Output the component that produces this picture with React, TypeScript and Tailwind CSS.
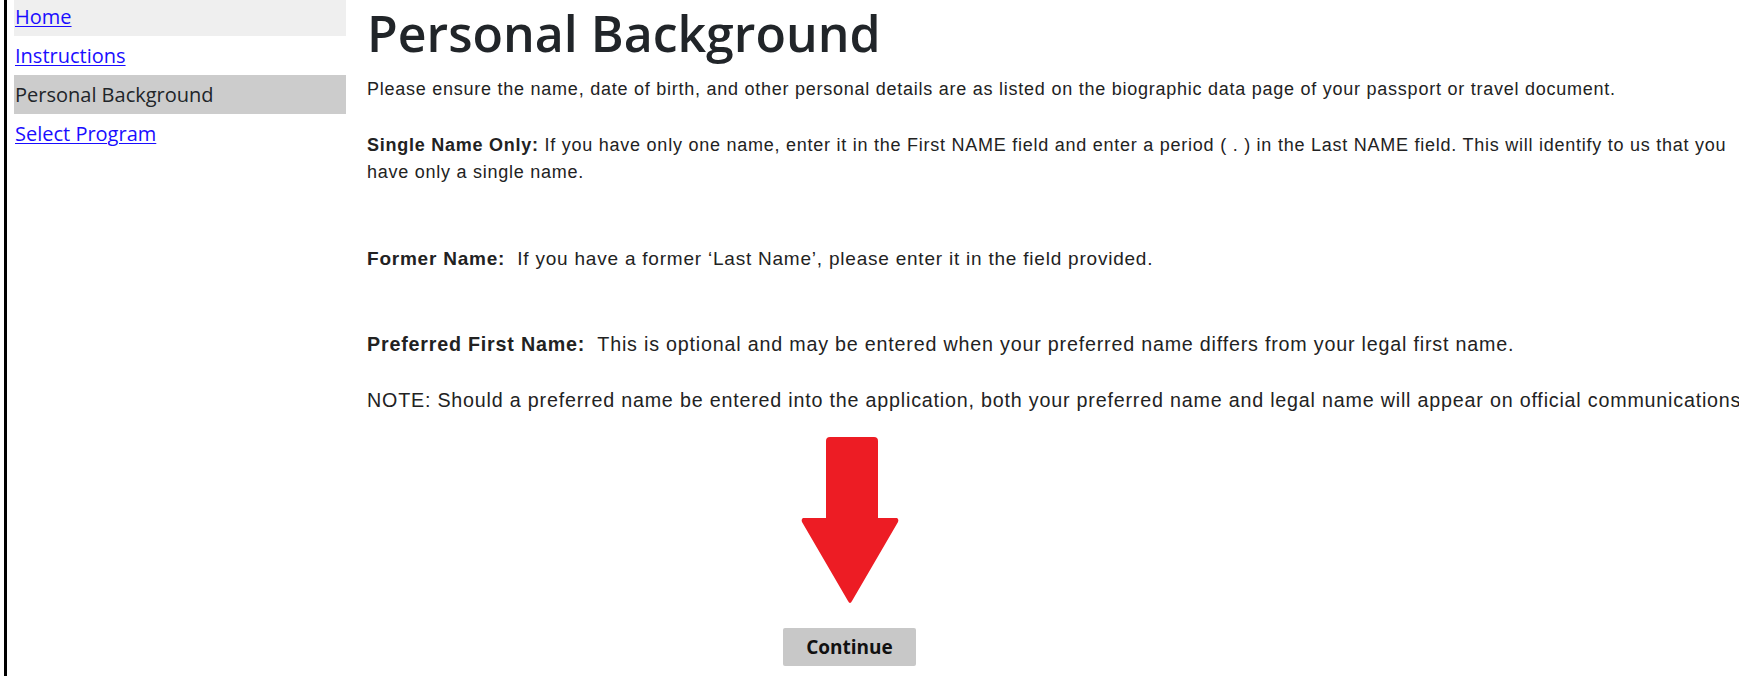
import React from 'react';

const navItems = [
  { label: 'Home', href: '#', bg: 'bg-[#efefef]' },
  { label: 'Instructions', href: '#', bg: '' },
  { label: 'Personal Background', href: '', bg: 'bg-[#cccccc]' },
  { label: 'Select Program', href: '#', bg: '' },
];

function SideNav() {
  return (
    <nav className="w-[332px] shrink-0 -mt-[3px] font-['Open_Sans',sans-serif] text-[20px]">
      {navItems.map((item) =>
        item.href ? (
          <div key={item.label} className={`h-[39px] leading-[39px] pl-px ${item.bg}`}>
            <a href={item.href} className="text-[#1a0dff] underline decoration-1 underline-offset-2">
              {item.label}
            </a>
          </div>
        ) : (
          <div key={item.label} className={`h-[39px] leading-[39px] pl-px text-[#212529] ${item.bg}`}>
            {item.label}
          </div>
        )
      )}
    </nav>
  );
}

function DownArrow() {
  return (
    <svg width="98" height="168" viewBox="0 0 98 168" className="block">
      <path
        d="M25 4 Q25 0 29 0 L73 0 Q77 0 77 4 L77 81 L96 81 Q98 82 97 85 L51 164 Q49 168 47 164 L1 85 Q0 82 2 81 L25 81 Z"
        fill="#ed1c24"
      />
    </svg>
  );
}

export default function App() {
  return (
    <div className="w-[1739px] h-[676px] overflow-hidden bg-white flex">
      <div className="w-[3px] ml-[4px] bg-black shrink-0" />
      <div className="ml-[7px] flex">
        <SideNav />
        <main className="ml-[21px] w-[1372px] shrink-0 text-[#222] font-['Liberation_Sans',Arial,sans-serif] text-[18px] tracking-[0.75px]">
          <h1 className="mt-[3px] leading-[60px] text-[50px] font-semibold tracking-normal text-[#212529] font-['Open_Sans',sans-serif]">
            Personal Background
          </h1>
          <p className="mt-[15px] leading-[22px]">
            Please ensure the name, date of birth, and other personal details are as listed on the biographic data page of your passport or travel document.
          </p>
          <p className="mt-[32px] leading-[27px]">
            <b>Single Name Only:</b> If you have only one name, enter it in the First NAME field and enter a period ( . ) in the Last NAME field. This will identify to us that you have only a single name.
          </p>
          <p className="mt-[61px] leading-[24px] text-[19px] tracking-[0.78px]">
            <b>Former Name:</b>&nbsp; If you have a former ‘Last Name’, please enter it in the field provided.
          </p>
          <div className="text-[19.7px] tracking-[0.8px]">
            <p className="mt-[61px] leading-[24px]">
              <b>Preferred First Name:</b>&nbsp; This is optional and may be entered when your preferred name differs from your legal first name.
            </p>
            <p className="mt-[32px] leading-[24px] whitespace-nowrap">
              NOTE: Should a preferred name be entered into the application, both your preferred name and legal name will appear on official communications.
            </p>
          </div>
          <div className="w-[965px] flex flex-col items-center">
            <div className="mt-[25px]">
              <DownArrow />
            </div>
            <button
              type="button"
              className="mt-[23px] w-[133px] h-[38px] rounded-[2px] bg-[#c8c8c8] text-[19px] font-bold tracking-normal text-[#111] font-['Open_Sans',sans-serif]"
            >
              Continue
            </button>
          </div>
        </main>
      </div>
    </div>
  );
}
